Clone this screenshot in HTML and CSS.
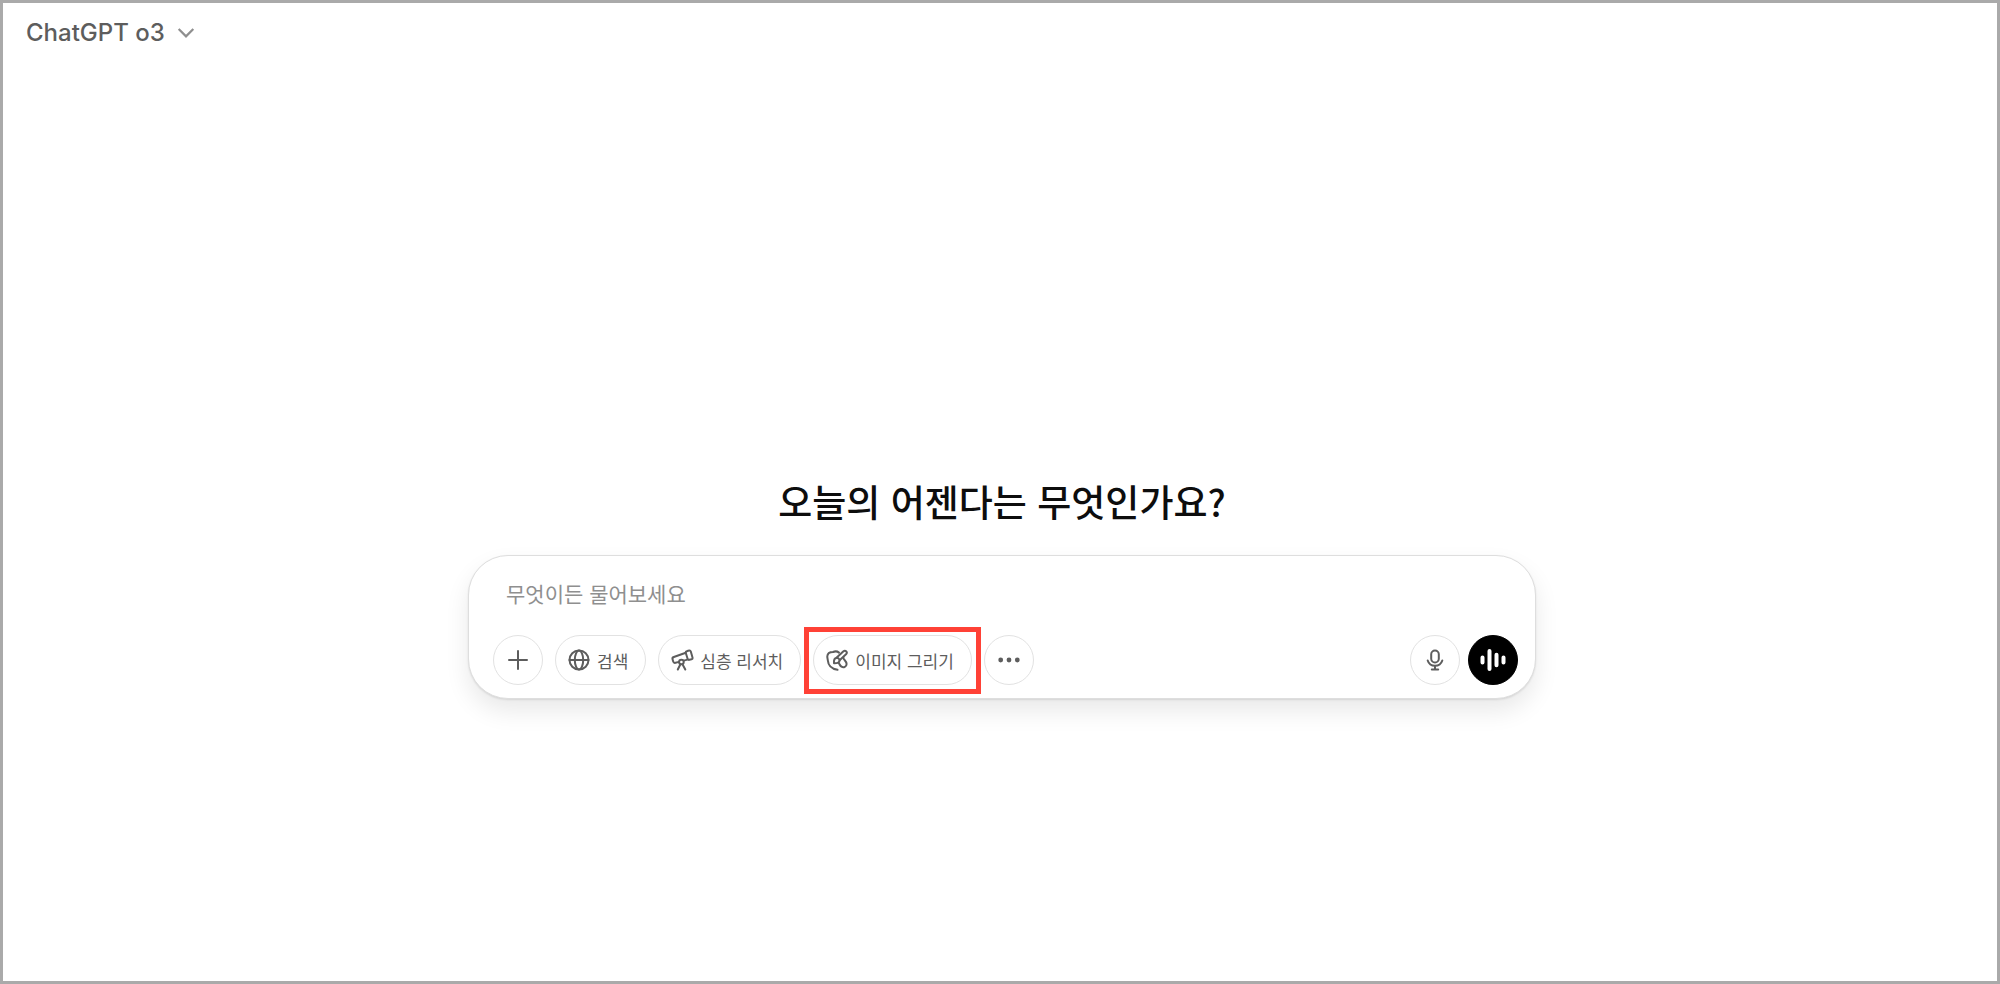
FILE: index.html
```html
<!DOCTYPE html>
<html lang="ko">
<head>
    <meta charset="UTF-8">
    <meta name="viewport" content="width=device-width, initial-scale=1.0">
    <title>ChatGPT</title>
    <link rel="stylesheet" href="styles.css">
</head>
<body>
    <header class="topbar">
        <button type="button" class="model-switch">
            ChatGPT o3
            <svg class="chevron" viewBox="0 0 16 16" aria-hidden="true"><path d="M1.5 4.5l6.5 6.5 6.5-6.5"/></svg>
        </button>
    </header>
    <main class="home">
        <h1 class="greeting">오늘의 어젠다는 무엇인가요?</h1>
        <form class="composer">
            <input type="text" class="prompt" placeholder="무엇이든 물어보세요" aria-label="무엇이든 물어보세요">
            <div class="toolbar">
                <button type="button" class="round" aria-label="추가">
                    <svg class="icon" viewBox="0 0 24 24"><path d="M12 3v18M3 12h18"/></svg>
                </button>
                <button type="button" class="chip">
                    <svg class="icon" viewBox="0 0 24 24"><circle cx="12" cy="12" r="9.5"/><ellipse cx="12" cy="12" rx="4.2" ry="9.5"/><path d="M2.5 12h19"/></svg>
                    검색
                </button>
                <button type="button" class="chip">
                    <!-- telescope -->
                    <svg class="icon" viewBox="0 0 24 24">
                        <path d="M16.8 3.2l2-.7a1.5 1.5 0 0 1 2 1l1.7 6a1.5 1.5 0 0 1-1 1.8l-2.1.5a1.5 1.5 0 0 1-1.8-1l-1.8-5.8a1.5 1.5 0 0 1 1-1.800z"/>
                        <path d="M15.8 4.8L3.8 9a1.9 1.9 0 0 0-1.2 2.4l.6 2.1a1.9 1.9 0 0 0 2.300 1.300l3.500-.9M13.800 12.600l3.600-1"/>
                        <circle cx="11.4" cy="14" r="2.3"/>
                        <path d="M10.3 16.5L7.8 21.5M12.6 16.5l2.7 5"/>
                    </svg>
                    심층 리서치
                </button>
                <div class="marked">
                    <button type="button" class="chip">
                        <!-- palette with brush -->
                        <svg class="icon" viewBox="0 0 24 24">
                            <path d="M14 4.600C12 3 9.800 3.200 8 4 4.800 4 2.500 5.500 2.300 8.300c-.1 1.500.4 2.500.5 4 .4 5 4 8.700 9.700 9.500"/>
                            <path d="M9 15.200c-.3-3 .2-5 2.500-5.300 1.600-.2 3 .9 3.100 2.400.1 2-1.900 3-5.600 2.900z"/>
                            <path d="M11.500 9.800l6.700-6.300c2.200-1.800 4.600.4 3.100 2.500l-6.700 6.200"/>
                            <path d="M18.500 9.800c-.2 2 3.100 3.100 3.100 6.200 0 2.700-3 4-5.100 2.700-1.300-.8-1.700-2.100-2.800-3.700"/>
                        </svg>
                        이미지 그리기
                    </button>
                </div>
                <button type="button" class="round" aria-label="더 보기">
                    <svg class="icon solid" viewBox="0 0 24 24"><circle cx="3.7" cy="12" r="2.4"/><circle cx="12" cy="12" r="2.4"/><circle cx="20.3" cy="12" r="2.4"/></svg>
                </button>
                <div class="voice">
                    <button type="button" class="round" aria-label="받아쓰기">
                        <svg class="icon" viewBox="0 0 24 24"><rect x="8.2" y="2.5" width="7.6" height="12" rx="3.8"/><path d="M4.7 12.5c1 3.2 3.9 5.3 7.3 5.3s6.3-2.1 7.3-5.3M12 18v3.5M8.8 21.5h6.4"/></svg>
                    </button>
                    <button type="button" class="round dark" aria-label="음성 모드">
                        <svg class="wave" viewBox="0 0 26 26"><path d="M2.5 10.6v4.8M9.5 4v18M16.5 7.8v10.4M23.5 10.6v4.8"/></svg>
                    </button>
                </div>
            </div>
        </form>
    </main>
</body>
</html>
```
FILE: styles.css
```css
* {
    box-sizing: border-box;
}
body {
    display: flex;
    flex-direction: column;
    min-height: 100vh;
    margin: 0;
    border: 3px solid #aaa;
    background: #fff;
    color: #5d5d5d;
    font-family: Inter, "Noto Sans CJK KR", sans-serif;
}
button, input {
    font: inherit;
    color: inherit;
}
button {
    cursor: pointer;
}
.topbar {
    display: flex;
    padding: 10px 23px;
}
.model-switch {
    display: flex;
    align-items: center;
    gap: 12px;
    padding: 0;
    border: none;
    background: none;
    font-size: 24px;
    font-weight: 500;
    line-height: 40px;
}
.chevron {
    width: 18px;
    height: 18px;
    fill: none;
    stroke: #8f8f8f;
    stroke-width: 2;
}
.home {
    flex: 1;
    display: flex;
    flex-direction: column;
    align-items: center;
    justify-content: center;
    padding: 132px 16px 0 20px;
}
.greeting {
    margin: 0 0 30px;
    color: #0d0d0d;
    font-family: "Noto Sans CJK KR", sans-serif;
    font-size: 37px;
    font-weight: 500;
    line-height: 48px;
}
.composer {
    width: 100%;
    max-width: 1068px;
    padding: 19px 17px 13px 24px;
    border: 1px solid #dedede;
    border-radius: 40px;
    background: #fff;
    box-shadow: 0 12px 24px rgba(0, 0, 0, 0.09), 0 1px 2px rgba(0, 0, 0, 0.1);
}
.prompt {
    display: block;
    width: 100%;
    height: 36px;
    margin-bottom: 24px;
    padding: 0 13px;
    border: none;
    outline: none;
    background: none;
    font-family: "Noto Sans CJK KR", sans-serif;
    font-size: 21px;
}
.prompt::placeholder {
    color: #8f8f8f;
    opacity: 1;
}
.toolbar, .voice {
    display: flex;
    align-items: center;
}
.toolbar {
    gap: 12px;
}
.voice {
    gap: 8px;
    margin-left: auto;
}
.round, .chip {
    display: flex;
    align-items: center;
    justify-content: center;
    height: 50px;
    padding: 0;
    border: 1px solid #e2e2e2;
    border-radius: 25px;
    background: #fff;
}
.round {
    width: 50px;
}
.chip {
    gap: 6px;
    padding: 0 17px 0 11px;
    font-family: "Noto Sans CJK KR", sans-serif;
    font-size: 17px;
    white-space: nowrap;
}
.icon {
    width: 24px;
    height: 24px;
    fill: none;
    stroke: #5d5d5d;
    stroke-width: 2;
    stroke-linecap: round;
    stroke-linejoin: round;
}
.solid {
    fill: #5d5d5d;
    stroke: none;
}
.dark {
    border-color: #000;
    background: #000;
}
.wave {
    width: 26px;
    height: 26px;
    fill: none;
    stroke: #fff;
    stroke-width: 4;
    stroke-linecap: round;
}
/* red frame drawn over the highlighted tool */
.marked {
    position: relative;
}
.marked::after {
    content: '';
    position: absolute;
    inset: -8px -9px -9px;
    border: 5px solid #ff4136;
    pointer-events: none;
}
```
